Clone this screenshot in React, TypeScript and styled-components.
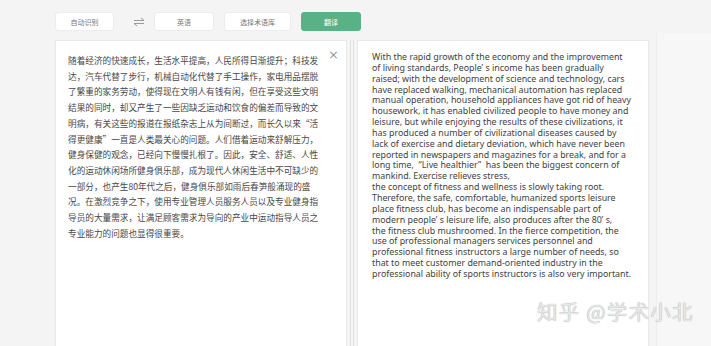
import styled, { createGlobalStyle } from "styled-components";

const GlobalStyle = createGlobalStyle`
  html, body {
    margin: 0;
    padding: 0;
    background: #f4f4f4;
    overflow: hidden;
  }
  body {
    font-family: "Noto Sans", "Noto Sans CJK SC", sans-serif;
  }
`;

const Pagina = styled.div`
  position: relative;
  width: 711px;
  height: 346px;
  overflow: hidden;
  box-sizing: border-box;
  padding: 12px 0 0 55px;
`;

const Barra = styled.div`
  display: flex;
  align-items: center;
  height: 19px;
`;

const Botao = styled.div<{ $largura: number; $verde?: boolean }>`
  width: ${(p) => p.$largura}px;
  height: 19px;
  box-sizing: border-box;
  display: flex;
  align-items: center;
  justify-content: center;
  border-radius: 3px;
  font-family: "Noto Sans CJK SC", sans-serif;
  font-size: 7px;
  background: ${(p) => (p.$verde ? "#58b285" : "#ffffff")};
  color: ${(p) => (p.$verde ? "#ffffff" : "#777777")};
  border: 1px solid ${(p) => (p.$verde ? "#58b285" : "#ececec")};
  margin-right: 10px;
`;

const Troca = styled.div`
  width: 30px;
  display: flex;
  justify-content: center;
  svg {
    display: block;
  }
`;

const Paineis = styled.div`
  display: flex;
  margin-top: 9px;
  height: 320px;
`;

const Painel = styled.div<{ $largura: number }>`
  position: relative;
  width: ${(p) => p.$largura}px;
  height: 100%;
  box-sizing: border-box;
  background: #ffffff;
  border: 1px solid #e9e9e9;
`;

const Divisor = styled.div`
  width: 10px;
  display: flex;
  justify-content: space-evenly;
  span {
    width: 1px;
    background: #e2e2e2;
  }
`;

const TextoChines = styled.div`
  padding: 12px 0 0 12px;
  font-family: "Noto Sans CJK SC", sans-serif;
  font-size: 8.65px;
  line-height: 15.7px;
  color: #474747;
`;

const TextoIngles = styled.div`
  padding: 11px 0 0 14px;
  font-family: "Noto Sans", sans-serif;
  font-size: 8.85px;
  line-height: 10.85px;
  color: #424242;
`;

const Linha = styled.div`
  white-space: pre;
`;

const Fechar = styled.div`
  position: absolute;
  top: 7px;
  right: 7px;
  color: #9a9a9a;
  font-family: "DejaVu Sans", sans-serif;
  font-size: 13px;
  line-height: 13px;
`;

const Lateral = styled.div`
  flex: 1;
  margin: -7px 0 0 7px;
  border-left: 1px solid #ededed;
  background: #f7f7f7;
`;

const MarcaDagua = styled.div`
  position: absolute;
  left: 537px;
  top: 296px;
  font-family: "Noto Sans CJK SC", sans-serif;
  font-size: 20.5px;
  letter-spacing: 1.2px;
  color: #e8e8e8;
  text-shadow: 0 0 1px #8f8f8f;
  white-space: nowrap;
`;

const IconeTroca = () => (
  <svg width="12" height="10" viewBox="0 0 12 10" fill="none" stroke="#9a9a9a" strokeWidth="1">
    <path d="M1 3.5h10M8 1l3 2.5" />
    <path d="M11 6.5H1M4 9L1 6.5" />
  </svg>
);

const linhasChines = [
  "随着经济的快速成长，生活水平提高，人民所得日渐提升；科技发",
  "达，汽车代替了步行，机械自动化代替了手工操作，家电用品摆脱",
  "了繁重的家务劳动，使得现在文明人有钱有闲，但在享受这些文明",
  "结果的同时，却又产生了一些因缺乏运动和饮食的偏差而导致的文",
  "明病，有关这些的报道在报纸杂志上从为间断过，而长久以来“活",
  "得更健康”一直是人类最关心的问题。人们借着运动来舒解压力，",
  "健身保健的观念，已经向下慢慢扎根了。因此，安全、舒适、人性",
  "化的运动休闲场所健身俱乐部，成为现代人休闲生活中不可缺少的",
  "一部分，也产生80年代之后，健身俱乐部如雨后春笋般涌现的盛",
  "况。在激烈竞争之下，使用专业管理人员服务人员以及专业健身指",
  "导员的大量需求，让满足顾客需求为导向的产业中运动指导人员之",
  "专业能力的问题也显得很重要。",
];

const linhasIngles = [
  "With the rapid growth of the economy and the improvement",
  "of living standards, People’ s income has been gradually",
  "raised; with the development of science and technology, cars",
  "have replaced walking, mechanical automation has replaced",
  "manual operation, household appliances have got rid of heavy",
  "housework, it has enabled civilized people to have money and",
  "leisure, but while enjoying the results of these civilizations, it",
  "has produced a number of civilizational diseases caused by",
  "lack of exercise and dietary deviation, which have never been",
  "reported in newspapers and magazines for a break, and for a",
  "long time,  “Live healthier”  has been the biggest concern of",
  "mankind. Exercise relieves stress,",
  "the concept of fitness and wellness is slowly taking root.",
  "Therefore, the safe, comfortable, humanized sports leisure",
  "place fitness club, has become an indispensable part of",
  "modern people’ s leisure life, also produces after the 80’ s,",
  "the fitness club mushroomed. In the fierce competition, the",
  "use of professional managers services personnel and",
  "professional fitness instructors a large number of needs, so",
  "that to meet customer demand-oriented industry in the",
  "professional ability of sports instructors is also very important.",
];

const App = () => {
  return (
    <>
      <GlobalStyle />
      <Pagina>
        <Barra>
          <Botao $largura={59}>自动识别</Botao>
          <Troca>
            <IconeTroca />
          </Troca>
          <Botao $largura={60}>英语</Botao>
          <Botao $largura={67}>选择术语库</Botao>
          <Botao $largura={60} $verde>
            翻译
          </Botao>
        </Barra>
        <Paineis>
          <Painel $largura={292}>
            <TextoChines>
              {linhasChines.map((l, i) => (
                <Linha key={i}>{l}</Linha>
              ))}
            </TextoChines>
            <Fechar>×</Fechar>
          </Painel>
          <Divisor>
            <span />
            <span />
          </Divisor>
          <Painel $largura={292}>
            <TextoIngles>
              {linhasIngles.map((l, i) => (
                <Linha key={i}>{l}</Linha>
              ))}
            </TextoIngles>
          </Painel>
          <Lateral />
        </Paineis>
        <MarcaDagua>知乎 @学术小北</MarcaDagua>
      </Pagina>
    </>
  );
};

export default App;
